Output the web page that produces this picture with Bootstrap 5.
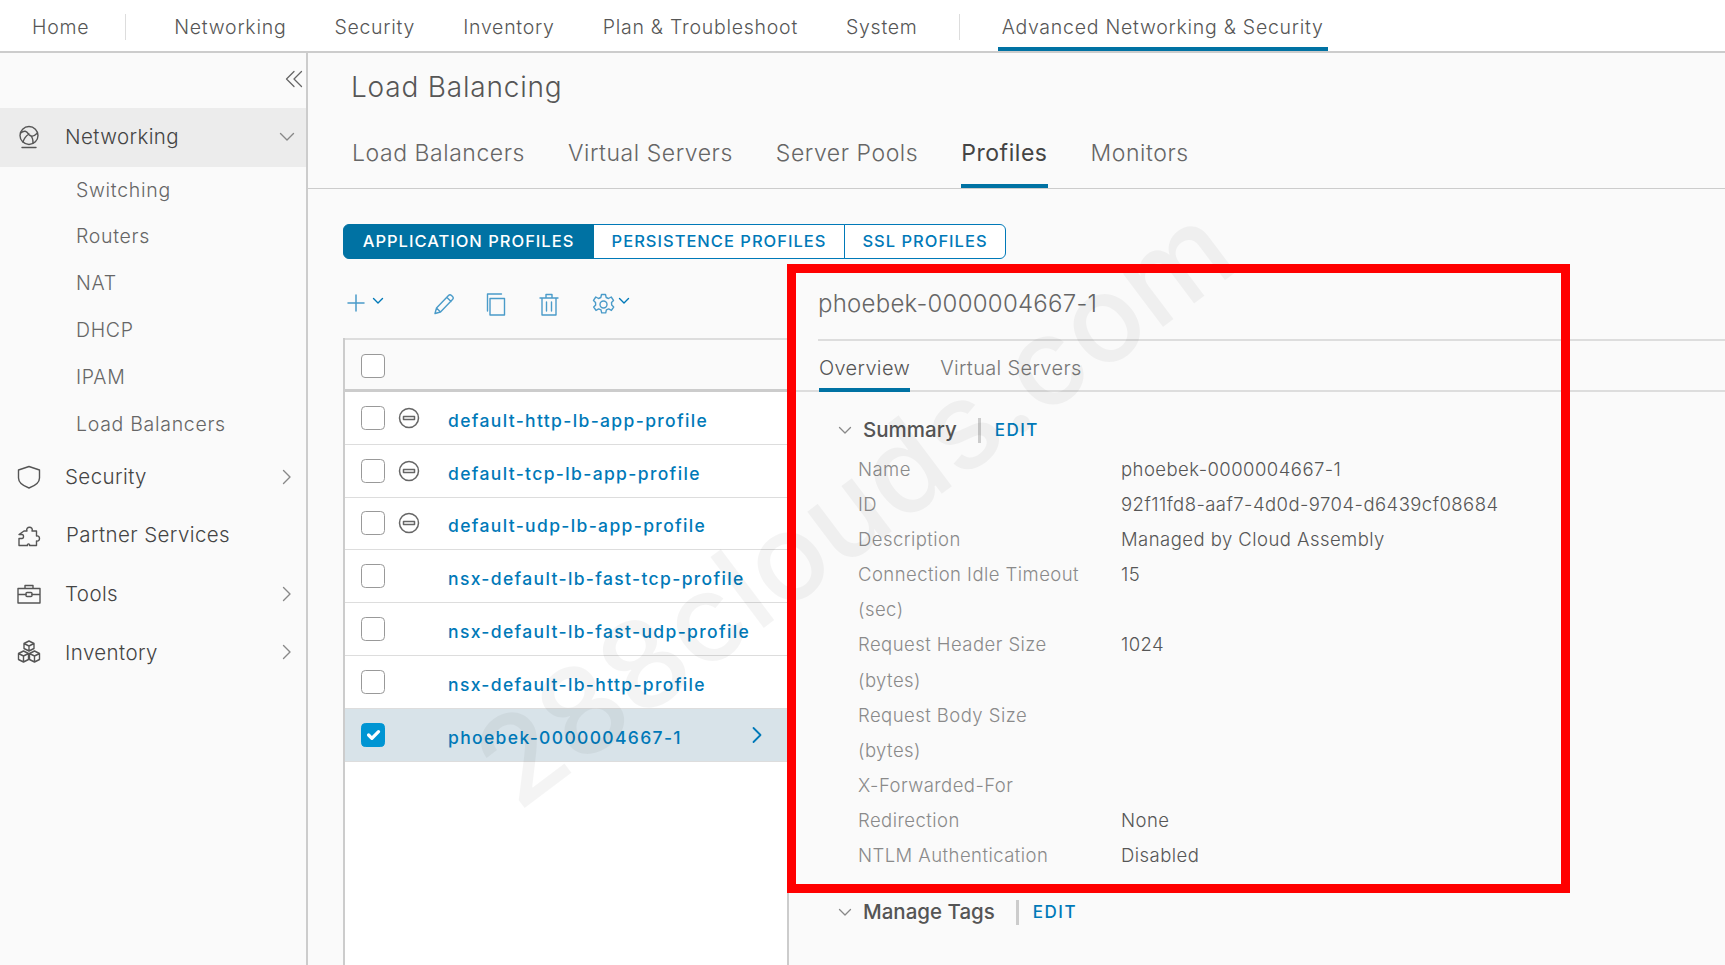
<!DOCTYPE html>
<html lang="en">
<head>
  <meta charset="UTF-8">
  <title>Load Balancing</title>
  <meta name="viewport" content="width=device-width, initial-scale=1">
  <link href="https://cdn.jsdelivr.net/npm/bootstrap@5.3.0/dist/css/bootstrap.min.css" rel="stylesheet">
  <style>
    html, body { height: 100%; overflow: hidden; }
    body { background: #fafafa; color: #565656; font-family: Inter, "Liberation Sans", sans-serif; font-weight: 300; position: relative; }
    svg { display: block; flex: none; fill: none; stroke-linecap: round; stroke-linejoin: round; }

    /* top nav */
    .topbar { height: 53px; background: #fff; border-bottom: 2px solid #ccc; font-size: 19.5px; letter-spacing: .74px; padding-left: 32px; }
    .toplink { color: #565656; text-decoration: none; height: 51px; line-height: 55px; white-space: nowrap; margin-left: 48px; }
    .toplink:first-child { margin-left: 0; }
    .toplink.on { border-bottom: 4px solid #0072a3; padding: 0 4px; }
    .topsep { width: 1px; height: 26px; background: #ddd; margin: 14px 0 0 36px; }
    .topsep + .toplink.on { margin-left: 38px; }
    .topsep.last { margin-left: 41px; }

    /* sidebar */
    .sidebar { width: 308px; flex: none; border-right: 2px solid #ccc; }
    .collapse-btn { height: 55px; padding: 17px 3px 0 0; }
    .sidehead { height: 58.6px; padding: 0 11px 0 17px; font-size: 20.5px; letter-spacing: .4px; color: #444; }
    .sidehead.on { background: #ececec; }
    .sidehead .lbl { margin-left: 24px; padding-top: 1px; }
    .sublink { height: 46.8px; line-height: 47.5px; padding-left: 76px; font-size: 19.5px; letter-spacing: .7px; color: #666; }

    /* main */
    .pagetitle { font-size: 28px; letter-spacing: .8px; padding: 13px 0 0 43px; height: 73px; color: #565656; }
    .tabrow { height: 63px; border-bottom: 1px solid #ccc; padding-left: 44px; gap: 43px; font-size: 23px; letter-spacing: .55px; }
    .tabitem { height: 62px; padding-top: 10px; white-space: nowrap; color: #666; }
    .tabitem.on { border-bottom: 4px solid #0072a3; color: #444; font-weight: 400; }

    .profilebtns { margin: 35px 0 1px 35px; height: 35px; }
    .profilebtns .btn { font-size: 16.5px; font-weight: 500; letter-spacing: 1px; line-height: 1; border-color: #0079b8; color: #0079b8; background: #fff; padding: 0; display: flex; align-items: center; justify-content: center; white-space: nowrap; }
    .profilebtns .btn.active { background: #0072a3; color: #fff; border-color: #0072a3; }

    .splitrow { margin-top: 5px; }
    .leftcol { width: 480px; flex: none; }
    .toolrow { height: 73px; position: relative; }
    .tool { position: absolute; top: 28px; }
    .tool.chev { top: 30px; }

    .gridbox { margin-left: 35px; border-left: 2px solid #ccc; background: #fff; height: 640px; }
    .gridhead { height: 54px; background: #fafafa; border-top: 2px solid #ddd; border-bottom: 3px solid #ccc; padding: 2px 0 0 16px; }
    .gridrow { height: 52.8px; border-bottom: 1px solid #ddd; padding-left: 16px; color: #0079b8; font-size: 17.5px; font-weight: 500; letter-spacing: 1.35px; white-space: nowrap; }
    .gridrow.sel { background: #d8e3e9; }
    .checkcell { width: 24px; height: 24px; margin: 0 !important; border: 1.5px solid #999; border-radius: 4px; flex: none; background-color: #fff; }
    .form-check-input:checked { background-color: #0095d3; border-color: #0095d3; }
    .minuscell { width: 42px; flex: none; padding-left: 13px; }
    .nocell { width: 42px; flex: none; }
    .rowname { margin-left: 21px; padding-top: 6px; }

    /* detail pane */
    .detail { flex: 1; border-left: 2px solid #ccc; margin-left: -1px; position: relative; min-width: 0; }
    .detailtitle { height: 76px; margin-left: 29px; border-bottom: 2px solid #ddd; font-size: 24px; letter-spacing: .25px; padding-top: 21px; color: #666; white-space: nowrap; }
    .detailtabs { height: 51px; border-bottom: 2px solid #ddd; padding-left: 30px; gap: 30px; font-size: 20px; letter-spacing: .35px; }
    .dtab { height: 51px; padding-top: 12px; color: #777; white-space: nowrap; }
    .dtab.on { border-bottom: 4px solid #0072a3; color: #555; }
    .secthead { padding-left: 49px; font-size: 20.5px; font-weight: 500; color: #555; height: 36px; white-space: nowrap; }
    .secthead .vbar { width: 3px; height: 25px; background: #ccc; margin: 0 14px 0 21px; }
    .secthead .editlnk { color: #0079b8; font-size: 17px; font-weight: 500; letter-spacing: 1.5px; padding-top: 2px; }
    .secthead .chevron { margin-right: 11px; }
    .proptable { margin-left: 69px; width: 640px; margin-top: 4px; font-size: 18.5px; letter-spacing: .45px; line-height: 35.1px; }
    .propname { width: 263px; padding-right: 35px; flex: none; color: #8a8a8a; }
    .propval { color: #565656; white-space: nowrap; }

    /* annotation and watermark lie over the page */
    .redbox { position: absolute; left: 787px; top: 264px; width: 783px; height: 629px; border: 9px solid #f00; pointer-events: none; }
    .watermark { position: absolute; left: 400px; top: 444px; font-size: 122px; font-weight: 500; color: rgba(0,0,0,.045); transform: rotate(-37deg); transform-origin: center; white-space: nowrap; pointer-events: none; line-height: 1; }
  </style>
</head>
<body>

<!-- barra superior -->
<nav class="topbar d-flex">
  <a class="toplink">Home</a>
  <span class="topsep"></span>
  <a class="toplink">Networking</a>
  <a class="toplink">Security</a>
  <a class="toplink">Inventory</a>
  <a class="toplink">Plan &amp; Troubleshoot</a>
  <a class="toplink">System</a>
  <span class="topsep last"></span>
  <a class="toplink on">Advanced Networking &amp; Security</a>
</nav>

<div class="d-flex">
  <!-- menu lateral -->
  <aside class="sidebar">
    <div class="collapse-btn d-flex justify-content-end">
      <svg width="18" height="18" viewBox="0 0 18 18" stroke="#666" stroke-width="1.3"><path d="M9 1.500 1.500 9 9 16.500M16.500 1.500 9 9l7.500 7.500"/></svg>
    </div>
    <div class="sidehead on d-flex align-items-center">
      <svg width="24" height="24" viewBox="0 0 24 24" stroke="#555" stroke-width="1.4"><circle cx="12" cy="10.500" r="9"/><path d="M3.500 8c4-3 6-2 8 1s5 3 9-1M6 17c1-4 3-6 6-8M14 11c2 2 2 4 2 7M5 22.500h14"/></svg>
      <span class="lbl flex-grow-1">Networking</span>
      <svg width="16" height="16" viewBox="0 0 16 16" stroke="#888" stroke-width="1.4"><path d="M1.500 4.500 8 11l6.500-6.500"/></svg>
    </div>
    <div class="sublink">Switching</div>
    <div class="sublink">Routers</div>
    <div class="sublink">NAT</div>
    <div class="sublink">DHCP</div>
    <div class="sublink">IPAM</div>
    <div class="sublink">Load Balancers</div>
    <div class="sidehead d-flex align-items-center">
      <svg width="24" height="24" viewBox="0 0 24 24" stroke="#555" stroke-width="1.4"><path d="M12 1.500 22.500 5v8c0 5-5 8-10.500 10C6.500 21 1.500 18 1.500 13V5z"/></svg>
      <span class="lbl flex-grow-1">Security</span>
      <svg width="16" height="16" viewBox="0 0 16 16" stroke="#888" stroke-width="1.4"><path d="M4.500 1.500 11 8l-6.500 6.500"/></svg>
    </div>
    <div class="sidehead d-flex align-items-center">
      <svg width="26" height="24" viewBox="0 0 26 24" stroke="#555" stroke-width="1.4"><path d="M2 22.500v-7h3c2 0 2-4 0-4H2l5-3.500h3c-2-5 7-5 5 0h4.500v5c4-1 4 6 0 5v4.500h-7c1-2-3-2-2 0z"/></svg>
      <span class="lbl flex-grow-1" style="margin-left:23px">Partner Services</span>
    </div>
    <div class="sidehead d-flex align-items-center">
      <svg width="24" height="24" viewBox="0 0 24 24" stroke="#555" stroke-width="1.4"><path d="M1 6.500h22V21H1zM1 12.500h8M15 12.500h8M8 6.500V3.500h8v3"/><rect x="9" y="10.500" width="6" height="4" rx="1"/></svg>
      <span class="lbl flex-grow-1">Tools</span>
      <svg width="16" height="16" viewBox="0 0 16 16" stroke="#888" stroke-width="1.4"><path d="M4.500 1.500 11 8l-6.500 6.500"/></svg>
    </div>
    <div class="sidehead d-flex align-items-center">
      <svg width="24" height="24" viewBox="0 0 24 24" stroke="#555" stroke-width="1.4"><path d="m12 1 5 2.500v5L12 11 7 8.500v-5zM7 3.500l5 2.500 5-2.500M12 6v5M6.500 11l5 2.500v6L6.500 22l-5-2.500v-6zM1.500 13.500l5 2.500 5-2.500M6.500 16v6M17.500 11l5 2.500v6l-5 2.500-5-2.500v-6zM12.500 13.500l5 2.500 5-2.500M17.500 16v6"/></svg>
      <span class="lbl flex-grow-1">Inventory</span>
      <svg width="16" height="16" viewBox="0 0 16 16" stroke="#888" stroke-width="1.4"><path d="M4.500 1.500 11 8l-6.500 6.500"/></svg>
    </div>
  </aside>

  <!-- contenido -->
  <main class="flex-grow-1" style="min-width:0">
    <div class="pagetitle">Load Balancing</div>
    <div class="tabrow d-flex">
      <div class="tabitem">Load Balancers</div>
      <div class="tabitem">Virtual Servers</div>
      <div class="tabitem">Server Pools</div>
      <div class="tabitem on">Profiles</div>
      <div class="tabitem">Monitors</div>
    </div>
    <div class="btn-group profilebtns d-inline-flex">
      <button type="button" class="btn active" style="width:251px">APPLICATION PROFILES</button>
      <button type="button" class="btn" style="width:252px">PERSISTENCE PROFILES</button>
      <button type="button" class="btn" style="width:162px">SSL PROFILES</button>
    </div>

    <div class="splitrow d-flex">
      <div class="leftcol">
        <div class="toolrow">
          <svg class="tool" style="left:38px" width="20" height="20" viewBox="0 0 20 20" stroke="#4a9bc9" stroke-width="1.5"><path d="M10 2v16M2 10h16"/></svg>
          <svg class="tool chev" style="left:64px" width="12" height="12" viewBox="0 0 12 12" stroke="#0079b8" stroke-width="1.4"><path d="M1.500 3.500 6 8l4.500-4.500"/></svg>
          <svg class="tool" style="left:125px" width="22" height="22" viewBox="0 0 22 22" stroke="#4a9bc9" stroke-width="1.4"><path d="M2 20.500 3.500 15 15.500 2.500c1-1 2-1 3 0l1 1c1 1 1 2 0 3L7.500 19zM3.500 15l4 4M14 4.500l4 4"/></svg>
          <svg class="tool" style="left:178px" width="20" height="23" viewBox="0 0 20 23" stroke="#4a9bc9" stroke-width="1.4"><path d="M4 22V5.500h14.500V22zM1.500 18V1h14"/></svg>
          <svg class="tool" style="left:231px" width="20" height="23" viewBox="0 0 20 23" stroke="#4a9bc9" stroke-width="1.4"><path d="M1 5h18M3 5v17h14V5M7 5V1.500h6V5M7.500 9v9M12.500 9v9"/></svg>
          <svg class="tool" style="left:284px" width="23" height="23" viewBox="0 0 23 23" stroke="#4a9bc9" stroke-width="1.4"><path d="M9.500 1.500h4l.7 3 2.300 1 2.700-1.500 2.300 3.400-2 2 .2 2.600 2 2-2.300 3.400-2.700-1.500-2.300 1-.7 3h-4l-.7-3-2.300-1-2.700 1.500-2.300-3.400 2-2-.2-2.600-2-2L3.800 4l2.700 1.500 2.300-1z"/><circle cx="11.500" cy="11.500" r="3.500"/></svg>
          <svg class="tool chev" style="left:310px" width="12" height="12" viewBox="0 0 12 12" stroke="#0079b8" stroke-width="1.4"><path d="M1.500 3.500 6 8l4.500-4.500"/></svg>
        </div>
        <div class="gridbox">
          <div class="gridhead d-flex align-items-center"><input class="form-check-input checkcell" type="checkbox"></div>
          <div class="gridrow d-flex align-items-center"><input class="form-check-input checkcell" type="checkbox"><span class="minuscell"><svg width="22" height="22" viewBox="0 0 22 22" stroke="#666" stroke-width="1.5"><circle cx="11" cy="11" r="9.500"/><path d="M5.500 9.500h11v3h-11z"/></svg></span><span class="rowname">default-http-lb-app-profile</span></div>
          <div class="gridrow d-flex align-items-center"><input class="form-check-input checkcell" type="checkbox"><span class="minuscell"><svg width="22" height="22" viewBox="0 0 22 22" stroke="#666" stroke-width="1.5"><circle cx="11" cy="11" r="9.500"/><path d="M5.500 9.500h11v3h-11z"/></svg></span><span class="rowname">default-tcp-lb-app-profile</span></div>
          <div class="gridrow d-flex align-items-center"><input class="form-check-input checkcell" type="checkbox"><span class="minuscell"><svg width="22" height="22" viewBox="0 0 22 22" stroke="#666" stroke-width="1.5"><circle cx="11" cy="11" r="9.500"/><path d="M5.500 9.500h11v3h-11z"/></svg></span><span class="rowname">default-udp-lb-app-profile</span></div>
          <div class="gridrow d-flex align-items-center"><input class="form-check-input checkcell" type="checkbox"><span class="nocell"></span><span class="rowname">nsx-default-lb-fast-tcp-profile</span></div>
          <div class="gridrow d-flex align-items-center"><input class="form-check-input checkcell" type="checkbox"><span class="nocell"></span><span class="rowname">nsx-default-lb-fast-udp-profile</span></div>
          <div class="gridrow d-flex align-items-center"><input class="form-check-input checkcell" type="checkbox"><span class="nocell"></span><span class="rowname">nsx-default-lb-http-profile</span></div>
          <div class="gridrow sel d-flex align-items-center"><input class="form-check-input checkcell" type="checkbox" checked><span class="nocell"></span><span class="rowname flex-grow-1">phoebek-0000004667-1</span><svg class="me-4" width="14" height="18" viewBox="0 0 14 18" stroke="#0079b8" stroke-width="1.8"><path d="m3.500 2 7 7-7 7"/></svg></div>
        </div>
      </div>

      <!-- panel de detalle -->
      <section class="detail">
        <div class="detailtitle">phoebek-0000004667-1</div>
        <div class="detailtabs d-flex">
          <div class="dtab on">Overview</div>
          <div class="dtab">Virtual Servers</div>
        </div>
        <div class="secthead d-flex align-items-center" style="margin-top:20px">
          <svg class="chevron" width="14" height="14" viewBox="0 0 14 14" stroke="#888" stroke-width="1.3"><path d="M1.500 4.500 7 10l5.500-5.500"/></svg>
          <span>Summary</span><span class="vbar"></span><span class="editlnk">EDIT</span>
        </div>
        <div class="proptable">
          <div class="d-flex"><div class="propname">Name</div><div class="propval">phoebek-0000004667-1</div></div>
          <div class="d-flex"><div class="propname">ID</div><div class="propval">92f11fd8-aaf7-4d0d-9704-d6439cf08684</div></div>
          <div class="d-flex"><div class="propname">Description</div><div class="propval">Managed by Cloud Assembly</div></div>
          <div class="d-flex"><div class="propname">Connection Idle Timeout (sec)</div><div class="propval">15</div></div>
          <div class="d-flex"><div class="propname">Request Header Size (bytes)</div><div class="propval">1024</div></div>
          <div class="d-flex"><div class="propname">Request Body Size (bytes)</div><div class="propval"></div></div>
          <div class="d-flex"><div class="propname">X-Forwarded-For</div><div class="propval"></div></div>
          <div class="d-flex"><div class="propname">Redirection</div><div class="propval">None</div></div>
          <div class="d-flex"><div class="propname">NTLM Authentication</div><div class="propval">Disabled</div></div>
        </div>
        <div class="secthead d-flex align-items-center" style="margin-top:21px">
          <svg class="chevron" width="14" height="14" viewBox="0 0 14 14" stroke="#888" stroke-width="1.3"><path d="M1.500 4.500 7 10l5.500-5.500"/></svg>
          <span>Manage Tags</span><span class="vbar"></span><span class="editlnk">EDIT</span>
        </div>
      </section>
    </div>
  </main>
</div>

<div class="watermark">288clouds.com</div>
<div class="redbox"></div>

<script src="https://cdn.jsdelivr.net/npm/bootstrap@5.3.0/dist/js/bootstrap.bundle.min.js"></script>
</body>
</html>
